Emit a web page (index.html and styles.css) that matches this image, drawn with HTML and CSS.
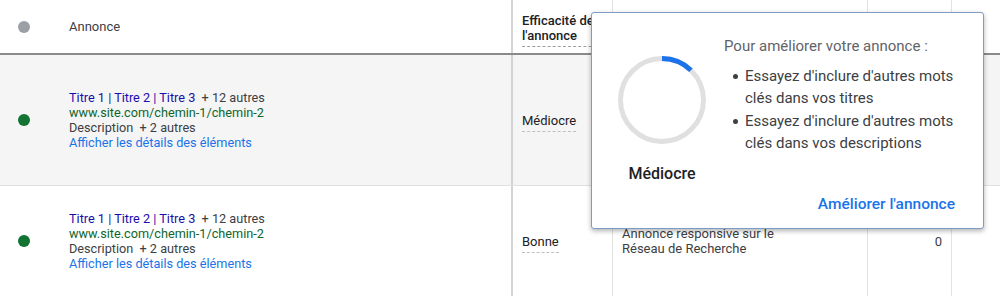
FILE: index.html
```html
<!DOCTYPE html>
<html lang="fr">
<head>
  <meta charset="UTF-8" />
  <title>Annonces</title>
  <link rel="stylesheet" href="styles.css">
</head>
<body>

  <div class="table">
    <!-- en-tête -->
    <div class="row head">
      <div class="cell c-dot"><span class="dot grey"></span></div>
      <div class="cell c-ad">Annonce</div>
      <div class="cell c-strength"><span class="head-dashed">Efficacité de l'annonce</span></div>
      <div class="cell c-type"></div>
      <div class="cell c-num"></div>
      <div class="cell c-int">Int</div>
    </div>

    <div class="row body first">
      <div class="cell c-dot"><span class="dot green"></span></div>
      <div class="cell c-ad">
        <div><span class="titles">Titre 1 | Titre 2 | Titre 3</span>&nbsp; + 12 autres</div>
        <div class="url">www.site.com/chemin-1/chemin-2</div>
        <div>Description&nbsp; + 2 autres</div>
        <div class="link">Afficher les détails des éléments</div>
      </div>
      <div class="cell c-strength"><span class="dashed">Médiocre</span></div>
      <div class="cell c-type"></div>
      <div class="cell c-num"></div>
      <div class="cell c-int"></div>
    </div>

    <div class="row body second">
      <div class="cell c-dot"><span class="dot green"></span></div>
      <div class="cell c-ad">
        <div><span class="titles">Titre 1 | Titre 2 | Titre 3</span>&nbsp; + 12 autres</div>
        <div class="url">www.site.com/chemin-1/chemin-2</div>
        <div>Description&nbsp; + 2 autres</div>
        <div class="link">Afficher les détails des éléments</div>
      </div>
      <div class="cell c-strength"><span class="dashed">Bonne</span></div>
      <div class="cell c-type">Annonce responsive sur le<br>Réseau de Recherche</div>
      <div class="cell c-num">0</div>
      <div class="cell c-int"></div>
    </div>
  </div>

  <!-- Popup efficacité -->
  <div class="popup">
    <div class="popup-main">
      <div class="gauge">
        <svg width="88" height="88" viewBox="0 0 88 88">
          <circle cx="44" cy="44" r="41.5" fill="none" stroke="#e0e0e0" stroke-width="5"/>
          <circle cx="44" cy="44" r="41.5" fill="none" stroke="#1a73e8" stroke-width="5"
                  stroke-dasharray="32 300" transform="rotate(-90 44 44)"/>
        </svg>
        <div class="gauge-label">Médiocre</div>
      </div>
      <div class="tips">
        <div class="tips-title">Pour améliorer votre annonce :</div>
        <ul>
          <li>Essayez d'inclure d'autres mots clés dans vos titres</li>
          <li>Essayez d'inclure d'autres mots clés dans vos descriptions</li>
        </ul>
      </div>
    </div>
    <div class="popup-foot">Améliorer l'annonce</div>
  </div>

</body>
</html>
```

FILE: styles.css
```css
* {
  box-sizing: border-box;
}
body {
  margin: 0;
  font-family: Roboto, "Liberation Sans", Arial, sans-serif;
  font-size: 13px;
  color: #3c4043;
  background: white;
  position: relative;
  overflow: hidden;
}
.table {
  width: 1000px;
}
.row {
  display: grid;
  grid-template-columns: 48px 463px 101px 255px 84px 49px;
}
.row.head {
  height: 55px;
  border-bottom: 2px solid #8a8a8a;
}
.row.first {
  height: 131px;
  background: #f5f5f5;
  border-bottom: 1px solid #e0e0e0;
}
.row.second {
  height: 110px;
}
.cell {
  display: flex;
  flex-direction: column;
  justify-content: center;
  line-height: 15px;
}
.c-dot {
  align-items: center;
}
.c-ad {
  padding-left: 21px;
}
.body .c-ad {
  font-size: 12.7px;
}
.c-strength {
  border-left: 2px solid #d3d3d3;
  padding-left: 9px;
  align-items: flex-start;
}
.c-type {
  border-left: 1px solid #e3e3e3;
  padding-left: 9px;
}
.c-num {
  border-left: 1px solid #e3e3e3;
  padding-right: 9px;
  text-align: right;
}
.c-int {
  border-left: 1px solid #e3e3e3;
  padding-left: 4px;
}
.head .cell {
  color: #202124;
  font-weight: 500;
}
.head .c-ad {
  font-weight: 400;
  color: #3c4043;
}
.head .c-int {
  font-weight: 700;
}
.head .c-strength {
  padding-top: 7px;
}
.head-dashed {
  display: block;
  width: 100%;
  padding-bottom: 3px;
  border-bottom: 1px dashed #9aa0a6;
}
.dot {
  width: 12px;
  height: 12px;
  border-radius: 50%;
}
.dot.grey {
  background: #9aa0a6;
}
.dot.green {
  background: #137333;
}
.titles {
  color: #1a0dab;
}
.url {
  color: #0d652d;
}
.link {
  color: #1a73e8;
}
.dashed {
  display: inline-block;
  padding-bottom: 3px;
  border-bottom: 1px dashed #bdc1c6;
  margin-top: 5px;
}
.body .c-strength {
  color: #202124;
}
.body .c-type,
.body .c-num {
  color: #3c4043;
}

/* popup */
.popup {
  position: absolute;
  left: 591px;
  top: 12px;
  width: 393px;
  height: 217px;
  background: white;
  border: 1px solid #7f9cc4;
  border-radius: 3px;
  box-shadow: 0 2px 5px rgba(0, 0, 0, 0.3);
}
.popup-main {
  display: flex;
}
.gauge {
  width: 140px;
  display: flex;
  flex-direction: column;
  align-items: center;
  padding-top: 43px;
}
.gauge-label {
  margin-top: 20px;
  font-size: 16px;
  line-height: 20px;
  font-weight: 500;
  color: #202124;
}
.tips {
  padding-top: 22px;
  margin-left: -8px;
  font-size: 15px;
  line-height: 22.5px;
}
.tips-title {
  color: #5f6368;
}
.tips ul {
  margin: 7px 0 0;
  padding-left: 21px;
  list-style: none;
  color: #3c4043;
  width: 250px;
}
.tips li {
  position: relative;
}
.tips li::before {
  content: "";
  position: absolute;
  left: -12px;
  top: 9px;
  width: 5px;
  height: 5px;
  border-radius: 50%;
  background: #3c4043;
}
.popup-foot {
  text-align: right;
  padding-right: 28px;
  margin-top: 11px;
  font-size: 15.5px;
  font-weight: 500;
  color: #1a73e8;
}
```
